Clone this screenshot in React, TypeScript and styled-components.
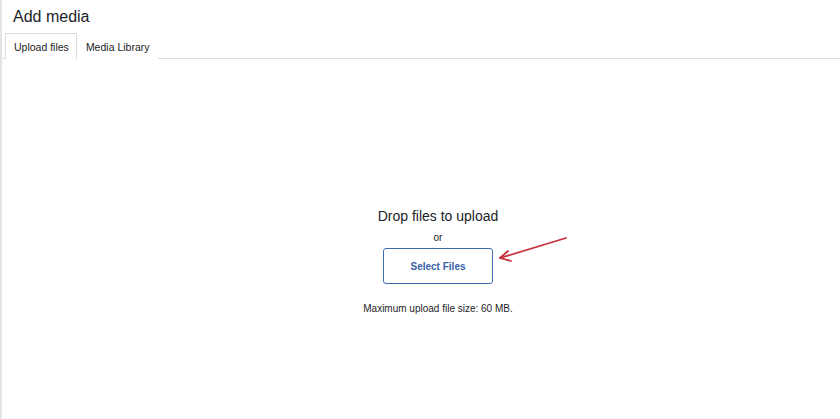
import React from "react";
import styled, { createGlobalStyle } from "styled-components";

const GlobalStyle = createGlobalStyle`
  html, body {
    margin: 0;
    padding: 0;
    background: #ffffff;
    overflow: hidden;
  }
  body {
    font-family: "Liberation Sans", Arial, sans-serif;
    color: #1d2327;
  }
`;

const Frame = styled.div`
  height: 419px;
  box-sizing: border-box;
  border-left: 2px solid #e4e4e4;
  display: flex;
  flex-direction: column;
`;

const Title = styled.h1`
  margin: 0;
  padding: 7px 0 0 11px;
  font-size: 16px;
  line-height: 20px;
  font-weight: 400;
  color: #1d2327;
`;

const TabBar = styled.div`
  margin-top: 6px;
  display: flex;
  padding-left: 3px;
  border-bottom: 1px solid #dcdcde;
`;

const Tab = styled.div<{ $active?: boolean }>`
  height: 26px;
  box-sizing: border-box;
  padding: 0 7px 0 8px;
  display: flex;
  align-items: center;
  font-size: 10.5px;
  color: #1d2327;
  background: #ffffff;
  border: 1px solid ${(p) => (p.$active ? "#dcdcde" : "transparent")};
  border-bottom: none;
  margin-bottom: -1px;
`;

const DropArea = styled.div`
  flex: 1;
  display: flex;
  flex-direction: column;
  align-items: center;
  padding-left: 34px;
  padding-top: 148px;
`;

const DropText = styled.div`
  font-size: 14px;
  line-height: 18px;
  color: #1d2327;
`;

const OrText = styled.div`
  margin-top: 6px;
  font-size: 10px;
  line-height: 14px;
  color: #1d2327;
`;

const ButtonWrap = styled.div`
  position: relative;
  margin-top: 3px;
`;

const SelectButton = styled.button`
  width: 110px;
  height: 36px;
  box-sizing: border-box;
  border: 1.5px solid #3f6bb0;
  border-radius: 3px;
  background: #ffffff;
  color: #3a5fa6;
  font-family: "Liberation Sans", Arial, sans-serif;
  font-size: 10px;
  font-weight: 700;
  padding: 0;
  cursor: pointer;
`;

const Arrow = styled.svg`
  position: absolute;
  left: calc(100% + 4px);
  top: -12px;
  overflow: visible;
`;

const MaxText = styled.div`
  margin-top: 18px;
  font-size: 10px;
  line-height: 13px;
  color: #1d2327;
`;

export default function App() {
  return (
    <>
      <GlobalStyle />
      <Frame>
        <Title>Add media</Title>
        <TabBar>
          <Tab $active>Upload files</Tab>
          <Tab>Media Library</Tab>
        </TabBar>
        <DropArea>
          <DropText>Drop files to upload</DropText>
          <OrText>or</OrText>
          <ButtonWrap>
            <SelectButton>Select Files</SelectButton>
            <Arrow width="72" height="28" viewBox="0 0 72 28">
              <g
                fill="none"
                stroke="#c8303f"
                strokeWidth="1.8"
                strokeLinecap="round"
                strokeLinejoin="round"
              >
                <line x1="69" y1="2" x2="3" y2="22" />
                <polyline points="11,15 3,22 14,25" />
              </g>
            </Arrow>
          </ButtonWrap>
          <MaxText>Maximum upload file size: 60 MB.</MaxText>
        </DropArea>
      </Frame>
    </>
  );
}
